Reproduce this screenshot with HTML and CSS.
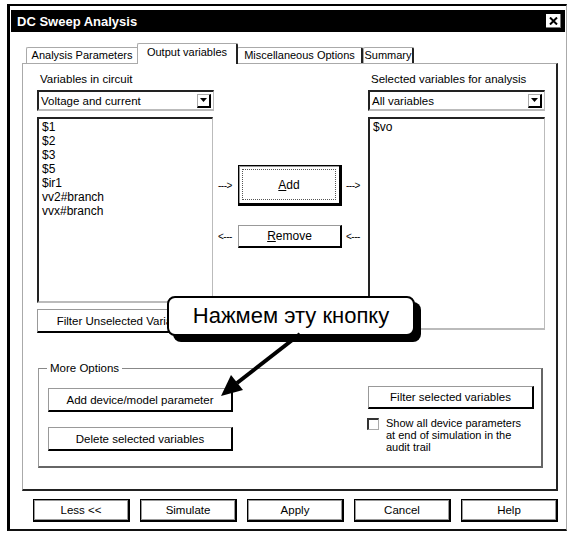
FILE: index.html
```html
<!DOCTYPE html>
<html>
<head>
<meta charset="utf-8">
<link rel="stylesheet" href="styles.css">
</head>
<body>
<div class="window">
  <div class="titlebar">
    <span class="title">DC Sweep Analysis</span>
    <span class="close"><svg width="9" height="8" viewBox="0 0 9 8"><path d="M1 0.5 L8 7.5 M8 0.5 L1 7.5" stroke="#000" stroke-width="2"/></svg></span>
  </div>
  <div class="tabs">
    <div class="tab t1">Analysis Parameters</div>
    <div class="tab active">Output variables</div>
    <div class="tab t3">Miscellaneous Options</div>
    <div class="tab t4">Summary</div>
  </div>
  <div class="panel">
    <div class="vars">
      <div class="col">
        <div class="label">Variables in circuit</div>
        <div class="select"><span>Voltage and current</span><span class="drop"><svg width="7" height="4" viewBox="0 0 7 4"><path d="M0 0 H7 L3.5 4 Z" fill="#000"/></svg></span></div>
        <div class="list short">
          <div>$1</div><div>$2</div><div>$3</div><div>$5</div><div>$ir1</div><div>vv2#branch</div><div>vvx#branch</div>
        </div>
        <div class="btn filter">Filter Unselected Variables</div>
      </div>
      <div class="col mid">
        <div class="move-row add-row"><span class="arr">---&gt;</span><div class="btn default"><span class="focus"><u>A</u>dd</span></div><span class="arr">---&gt;</span></div>
        <div class="move-row"><span class="arr">&lt;---</span><div class="btn remove"><u>R</u>emove</div><span class="arr">&lt;---</span></div>
      </div>
      <div class="col">
        <div class="label">Selected variables for analysis</div>
        <div class="select"><span>All variables</span><span class="drop"><svg width="7" height="4" viewBox="0 0 7 4"><path d="M0 0 H7 L3.5 4 Z" fill="#000"/></svg></span></div>
        <div class="list tall">
          <div>$vo</div>
        </div>
      </div>
    </div>
    <div class="group">
      <div class="group-title">More Options</div>
      <div class="group-body">
        <div class="gcol">
          <div class="btn wide">Add device/model parameter</div>
          <div class="btn wide">Delete selected variables</div>
        </div>
        <div class="gcol gright">
          <div class="btn fsel">Filter selected variables</div>
          <div class="check"><span class="box"></span><span class="check-text">Show all device parameters<br>at end of simulation in the<br>audit trail</span></div>
        </div>
      </div>
    </div>
  </div>
  <div class="actions">
    <div class="btn act">Less &lt;&lt;</div>
    <div class="btn act">Simulate</div>
    <div class="btn act">Apply</div>
    <div class="btn act">Cancel</div>
    <div class="btn act">Help</div>
  </div>
</div>
<div class="callout">Нажмем эту кнопку</div>
<svg class="arrow" width="567" height="533" viewBox="0 0 567 533">
  <line x1="300" y1="334" x2="237" y2="383" stroke="#000" stroke-width="4"/>
  <polygon points="221,396 243,390 231,375" fill="#000"/>
</svg>
</body>
</html>
```

FILE: styles.css
```css
* { box-sizing: border-box; }
html, body { margin: 0; padding: 0; background: #fff; }
body {
  width: 567px;
  height: 533px;
  overflow: hidden;
  position: relative;
  font-family: "Liberation Sans", Arial, sans-serif;
  font-size: 11.5px;
  color: #000;
}
.window {
  margin: 4px 0 0 7px;
  width: 560px;
  height: 527px;
  border-left: 3px solid #000;
  border-top: 2px solid #000;
  border-bottom: 2px solid #111;
  border-right: 1px solid #aaa;
  padding-top: 4px;
}
.titlebar {
  height: 22px;
  margin: 0 1px 0 1px;
  background: #000;
  color: #fff;
  display: flex;
  align-items: center;
  justify-content: space-between;
  padding: 0 4px 0 6px;
}
.title {
  font: bold 13px "Liberation Sans", Arial, sans-serif;
}
.close {
  width: 15px;
  height: 14px;
  background: #fff;
  border-right: 1px solid #777;
  border-bottom: 1px solid #777;
  display: flex;
  align-items: center;
  justify-content: center;
}
.close svg { display: block; }

.tabs {
  display: flex;
  align-items: flex-end;
  margin: 11px 0 0 16px;
  height: 20px;
  position: relative;
  z-index: 1;
  font-size: 11px;
}
.tab {
  height: 16px;
  line-height: 14px;
  padding: 0;
  text-align: center;
  border-top: 1px solid #aaa;
  border-left: 1px solid #aaa;
  border-right: 2px solid #222;
  border-radius: 2px 2px 0 0;
  background: #fff;
  white-space: nowrap;
}
.t1 { width: 113px; }
.t3 { width: 126px; }
.t4 { width: 51px; }
.tab.active {
  width: 101px;
  height: 21px;
  margin: 0 -1px -1px -2px;
  padding-top: 2px;
  line-height: 13px;
  position: relative;
}

.panel {
  margin-left: 12px;
  width: 536px;
  height: 428px;
  border-top: 1px solid #aaa;
  border-left: 1px solid #aaa;
  border-right: 2px solid #222;
  border-bottom: 2px solid #222;
  padding: 8px 0 0 14px;
}
.vars {
  display: grid;
  grid-template-columns: 177px 154px 177px;
}
.col { display: flex; flex-direction: column; }
.label {
  height: 14px;
  line-height: 14px;
  padding-left: 3px;
  white-space: nowrap;
}
.select {
  margin-top: 4px;
  height: 21px;
  border-top: 2px solid #222;
  border-left: 2px solid #222;
  border-right: 1px solid #bbb;
  border-bottom: 2px solid #bbb;
  display: flex;
  align-items: center;
  justify-content: space-between;
  padding: 0 2px 0 2px;
}
.drop {
  width: 14px;
  height: 14px;
  border-top: 1px solid #aaa;
  border-left: 1px solid #aaa;
  border-right: 2px solid #000;
  border-bottom: 2px solid #000;
  display: flex;
  align-items: center;
  justify-content: center;
}
.drop svg { display: block; }
.list {
  margin-top: 6px;
  border-top: 2px solid #222;
  border-left: 2px solid #222;
  border-right: 1px solid #bbb;
  border-bottom: 2px solid #bbb;
  padding: 1px 0 0 3px;
  line-height: 14px;
  font-size: 12px;
}
.list.short { height: 186px; width: 176px; }
.list.tall { height: 213px; }

.btn {
  border-top: 1px solid #999;
  border-left: 1px solid #999;
  border-right: 2px solid #000;
  border-bottom: 2px solid #000;
  display: flex;
  align-items: center;
  justify-content: center;
  white-space: nowrap;
  overflow: hidden;
  background: #fff;
}
.btn.filter {
  margin-top: 6px;
  height: 24px;
}

.mid { padding-top: 93px; }
.move-row {
  display: flex;
  align-items: center;
  justify-content: center;
  gap: 4px;
  padding-right: 2px;
}
.add-row { height: 41px; margin-bottom: 19px; }
.arr { width: 16px; font-size: 10px; letter-spacing: -0.5px; }
.btn.default {
  width: 104px;
  height: 41px;
  border: 1px solid #000;
  border-right-width: 3px;
  border-bottom-width: 3px;
  box-shadow: inset 1px 1px 0 #999;
  padding: 3px;
  align-items: stretch;
}
.focus {
  flex: 1;
  border: 1px dotted #555;
  display: flex;
  align-items: center;
  justify-content: center;
  font-size: 12px;
}
.btn.remove {
  width: 104px;
  height: 23px;
  font-size: 12px;
}

.group {
  margin: 35px 0 0 1px;
  width: 505px;
  height: 100px;
  border-top: 1px solid #888;
  border-left: 1px solid #999;
  border-right: 2px solid #666;
  border-bottom: 2px solid #666;
}
.group-title {
  display: inline-block;
  margin: -8px 0 0 8px;
  padding: 0 3px;
  height: 14px;
  line-height: 14px;
  background: #fff;
  vertical-align: top;
}
.group-body {
  display: flex;
  justify-content: space-between;
  padding: 7px 7px 0 9px;
}
.gcol { display: flex; flex-direction: column; }
.btn.wide {
  width: 185px;
  height: 24px;
}
.btn.wide + .btn.wide { margin-top: 15px; }
.gright { width: 167px; margin-top: -2px; }
.btn.fsel {
  margin-left: 1px;
  width: 166px;
  height: 23px;
}
.check {
  display: flex;
  gap: 7px;
  margin-top: 8px;
}
.box {
  flex: none;
  width: 12px;
  height: 12px;
  margin-top: 1px;
  border-top: 2px solid #333;
  border-left: 2px solid #333;
  border-right: 1px solid #aaa;
  border-bottom: 1px solid #aaa;
}
.check-text { line-height: 12px; font-size: 11px; }

.actions {
  display: flex;
  justify-content: space-between;
  margin: 8px 0 0 23px;
  width: 525px;
}
.btn.act {
  width: 97px;
  height: 23px;
  border: 1px solid #000;
  border-right-width: 2px;
  border-bottom-width: 2px;
  box-shadow: inset 1px 1px 0 #999, inset -1px -1px 0 #999;
}

.callout {
  position: absolute;
  left: 167px;
  top: 296px;
  width: 248px;
  height: 40px;
  border: 2px solid #000;
  border-radius: 8px;
  background: #fff;
  box-shadow: 6px 6px 0 #000;
  display: flex;
  align-items: center;
  justify-content: center;
  font-family: "Liberation Sans", Arial, sans-serif;
  font-size: 22px;
  white-space: nowrap;
}
.arrow {
  position: absolute;
  left: 0;
  top: 0;
  pointer-events: none;
}
```
